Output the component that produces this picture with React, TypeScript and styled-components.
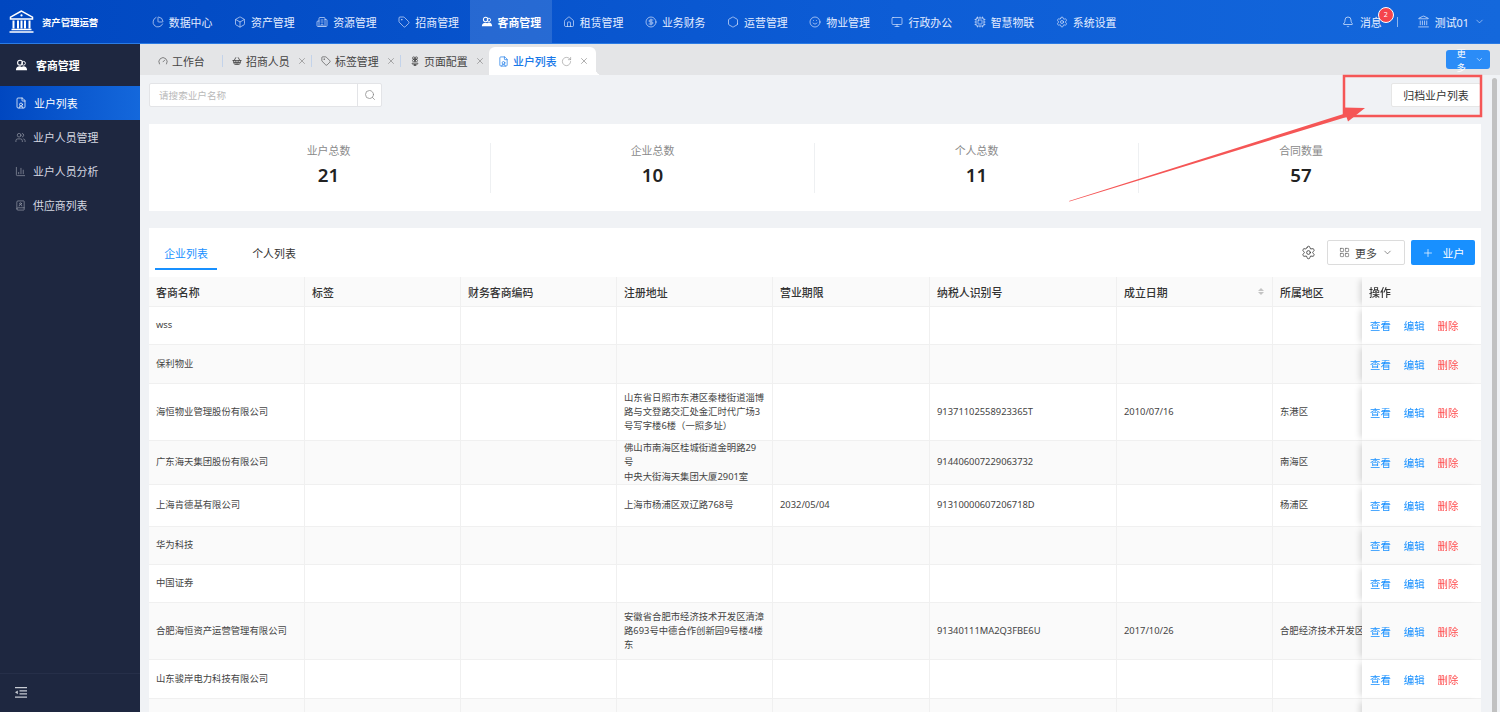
import React from 'react';
import styled, { createGlobalStyle } from 'styled-components';
import {
  ChartPie, Box, Building2, Tag, House, CircleDollarSign, Hexagon, Smile, Monitor, Cpu, Settings, Bell,
  Landmark, ChevronDown, Plus, Search, X, RotateCw, Gauge, FileUser, Users, ChartColumn, BookUser, Flower2, ShoppingBasket, LayoutGrid,
} from 'lucide-react';

const Global = createGlobalStyle`
  html, body { margin: 0; padding: 0; height: 100%; overflow: hidden; }
  body { font-family: "Noto Sans", "Noto Sans CJK SC", sans-serif; font-size: 9.36px; color: #333; background: #f0f2f5; }
  #root { height: 100%; }
  * { box-sizing: border-box; }
`;

const Page = styled.div`
  position: relative;
  width: 1500px;
  height: 712px;
  display: flex;
  flex-direction: column;
  overflow: hidden;
`;
const TopBar = styled.header`
  height: 44px;
  flex: none;
  display: flex;
  align-items: stretch;
  color: #e8f0ff;
  background: linear-gradient(90deg, #0047c0 0%, #0d5dd6 60%, #1468dc 100%);
  border-bottom: 1px solid #2b7be4;
`;
const Brand = styled.div`
  width: 141px;
  display: flex;
  align-items: center;
  gap: 8px;
  padding-left: 9px;
  color: #fff;
  font-size: 9.36px;
  font-weight: 700;
`;
const NavItem = styled.div<{ $active?: boolean }>`
  width: 82.2px;
  display: flex;
  align-items: center;
  justify-content: center;
  gap: 5px;
  font-size: 10.9px;
  white-space: nowrap;
  background: ${(p) => (p.$active ? 'rgba(255,255,255,.13)' : 'transparent')};
  font-weight: ${(p) => (p.$active ? 700 : 400)};
  color: ${(p) => (p.$active ? '#fff' : '#e4edff')};
`;
const TopRight = styled.div`
  margin-left: auto;
  display: flex;
  align-items: center;
  padding-right: 15px;
  font-size: 10.9px;
`;
const Message = styled.div`
  position: relative;
  display: flex;
  align-items: center;
  gap: 6px;
`;
const Badge = styled.span`
  position: absolute;
  right: -12px;
  top: -7px;
  width: 16px;
  height: 16px;
  border-radius: 50%;
  background: #f5444c;
  border: 1px solid #fff;
  color: #fff;
  font-size: 7px;
  display: flex;
  align-items: center;
  justify-content: center;
`;
const TopDivider = styled.span`
  width: 1px;
  height: 10px;
  background: #8db6ee;
  margin: 0 19px 0 15px;
`;
const UserBox = styled.div`
  display: flex;
  align-items: center;
  gap: 5px;
`;

const Body = styled.div`
  flex: 1;
  min-height: 0;
  display: flex;
`;
const Sidebar = styled.aside`
  width: 140px;
  flex: none;
  background: #1e2740;
  display: flex;
  flex-direction: column;
  color: #d5d8e0;
  font-size: 10.9px;
`;
const SideTitle = styled.div`
  height: 42px;
  display: flex;
  align-items: center;
  gap: 8px;
  padding-left: 15px;
  color: #fff;
  font-weight: 700;
`;
const SideItem = styled.div<{ $active?: boolean }>`
  height: 34px;
  display: flex;
  align-items: center;
  gap: 7px;
  padding-left: 15px;
  color: ${(p) => (p.$active ? '#fff' : '#d5d8e0')};
  background: ${(p) => (p.$active ? 'linear-gradient(90deg, #0047c0, #1468dc)' : 'transparent')};
  svg { opacity: ${(p) => (p.$active ? 1 : 0.7)}; }
`;
const SideFoot = styled.div`
  margin-top: auto;
  height: 39px;
  display: flex;
  align-items: center;
  padding: 0 0 2px 15px;
  border-top: 1px solid #262f49;
`;
const Main = styled.main`
  flex: 1;
  min-width: 0;
  display: flex;
  flex-direction: column;
`;
const TabBar = styled.div`
  height: 31px;
  flex: none;
  background: #e4e5e7;
  display: flex;
  align-items: flex-end;
  font-size: 10.9px;
  color: #444;
`;
const PageTab = styled.div<{ $first?: boolean; $active?: boolean }>`
  position: relative;
  height: 28px;
  display: flex;
  align-items: center;
  white-space: nowrap;
  gap: 4px;
  width: ${(p) => (p.$first ? '82px' : p.$active ? '107px' : '89px')};
  padding-left: ${(p) => (p.$first ? '18px' : p.$active ? '9px' : '10px')};
  background: ${(p) => (p.$active ? '#fff' : 'transparent')};
  border-radius: ${(p) => (p.$active ? '6px 6px 0 0' : '0')};
  color: ${(p) => (p.$active ? '#1677e8' : '#444')};
  font-weight: ${(p) => (p.$active ? 500 : 400)};
  &::before {
    content: '';
    display: ${(p) => (p.$first || p.$active ? 'none' : 'block')};
    position: absolute;
    left: 0;
    top: 8px;
    width: 1px;
    height: 12px;
    background: #c3d3ea;
  }
  &::after {
    content: '';
    display: ${(p) => (p.$active ? 'block' : 'none')};
    position: absolute;
    right: -6px;
    bottom: 0;
    width: 6px;
    height: 6px;
    background: radial-gradient(circle at 100% 0, transparent 6px, #fff 6.5px);
  }
`;
const TabClose = styled(X)`
  margin-left: 3px;
  color: #777;
`;
const TabMore = styled.button`
  margin: 0 10px 6px auto;
  width: 44px;
  height: 19px;
  border: 0;
  border-radius: 3px;
  background: #2b8cf7;
  color: #fff;
  font: inherit;
  font-size: 9.36px;
  display: flex;
  align-items: center;
  justify-content: center;
  gap: 5px;
`;
const Content = styled.div`
  position: relative;
  flex: 1;
  min-height: 0;
  overflow: hidden;
  padding: 8px 19px 0 9px;
  background: #f0f2f5;
  display: flex;
  flex-direction: column;
`;
const Scrollbar = styled.div`
  position: absolute;
  top: 3px;
  right: 3px;
  bottom: 0;
  width: 5px;
  border-radius: 3px 3px 0 0;
  background: #c1c1c1;
`;
const ToolRow = styled.div`
  height: 24px;
  flex: none;
  display: flex;
  justify-content: space-between;
`;
const SearchBox = styled.div`
  width: 233px;
  display: flex;
  background: #fff;
  border: 1px solid #e3e4e7;
  border-radius: 2px;
  color: #bbb;
  font-size: 10.9px;
`;
const SearchText = styled.div`
  flex: 1;
  display: flex;
  align-items: center;
  padding-left: 9px;
  font-size: 9.6px;
  color: #b9b9b9;
`;
const SearchBtn = styled.div`
  width: 24px;
  display: flex;
  align-items: center;
  justify-content: center;
  border-left: 1px solid #e3e4e7;
  color: #888;
`;
const ArchiveBtn = styled.div`
  width: 90px;
  background: #fff;
  border: 1px solid #e6e6e6;
  border-radius: 2px;
  display: flex;
  align-items: center;
  justify-content: center;
  font-size: 10.9px;
  color: #333;
`;
const StatCard = styled.section`
  margin-top: 17px;
  height: 87px;
  flex: none;
  background: #fff;
  padding: 19px 18px 18px;
  display: grid;
  grid-template-columns: repeat(4, 1fr);
`;
const Stat = styled.div<{ $last?: boolean }>`
  height: 50px;
  display: flex;
  flex-direction: column;
  align-items: center;
  border-right: ${(p) => (p.$last ? '0' : '1px solid #eef0f2')};
`;
const StatLabel = styled.div`
  font-size: 10.9px;
  line-height: 16px;
  color: #8a8a8a;
`;
const StatValue = styled.div`
  margin-top: 4px;
  font-size: 18.7px;
  line-height: 24px;
  font-weight: 600;
  color: #222;
`;
const ListCard = styled.section`
  margin-top: 17px;
  flex: 1;
  min-height: 0;
  background: #fff;
  display: flex;
  flex-direction: column;
`;
const ListHead = styled.div`
  height: 49px;
  flex: none;
  display: flex;
  align-items: flex-start;
  padding: 12px 6px 0 6px;
`;
const ListTab = styled.div<{ $active?: boolean }>`
  height: 30px;
  width: ${(p) => (p.$active ? '62px' : '44px')};
  margin-right: ${(p) => (p.$active ? '35px' : '0')};
  display: flex;
  justify-content: center;
  padding-top: 5px;
  font-size: 10.9px;
  color: ${(p) => (p.$active ? '#1890ff' : '#333')};
  border-bottom: ${(p) => (p.$active ? '2px solid #1890ff' : '0')};
`;
const ListActions = styled.div`
  margin-left: auto;
  display: flex;
  align-items: center;
  gap: 6px;
  height: 25px;
`;
const GearWrap = styled.div`
  display: flex;
  margin-right: 5px;
  color: #333;
`;
const MoreBtn = styled.div`
  width: 78px;
  height: 25px;
  background: #fff;
  border: 1px solid #dcdcdc;
  border-radius: 2px;
  font-size: 10.9px;
  display: flex;
  align-items: center;
  justify-content: center;
  gap: 5px;
  color: #444;
`;
const AddBtn = styled.div`
  width: 64px;
  height: 25px;
  background: #1890ff;
  border-radius: 2px;
  color: #fff;
  font-size: 10.9px;
  display: flex;
  align-items: center;
  justify-content: center;
  gap: 9px;
`;
const TableWrap = styled.div`
  flex: 1;
  min-height: 0;
  overflow: hidden;
`;
const Table = styled.table`
  table-layout: fixed;
  width: 1399px;
  border-collapse: separate;
  border-spacing: 0;
`;
const Th = styled.th<{ $sticky?: boolean }>`
  height: 30px;
  padding: 0 7px;
  text-align: left;
  font-size: 10.9px;
  font-weight: 500;
  color: #333;
  background: #fafafa;
  border-right: 1px solid #f0f0f0;
  border-bottom: 1px solid #f0f0f0;
  white-space: nowrap;
  ${(p) =>
    p.$sticky
      ? `position: sticky; right: 0; padding-left: 7px; border-right: 0; box-shadow: -5px 0 6px -3px rgba(0,0,0,.15);`
      : ''}
`;
const SortHead = styled.div`
  display: flex;
  align-items: center;
  justify-content: space-between;
  padding-right: 1px;
`;
const Carets = styled.div`
  display: flex;
  flex-direction: column;
  gap: 1px;
`;
const Caret = styled.i<{ $down?: boolean }>`
  display: block;
  width: 0;
  height: 0;
  border-left: 3px solid transparent;
  border-right: 3px solid transparent;
  border-bottom: ${(p) => (p.$down ? '0' : '3px solid #c4c4c4')};
  border-top: ${(p) => (p.$down ? '3px solid #c4c4c4' : '0')};
`;
const Tr = styled.tr<{ $h: number; $even: boolean }>`
  height: ${(p) => p.$h}px;
  background: ${(p) => (p.$even ? '#fafafa' : '#fff')};
`;
const Td = styled.td`
  padding: 0 7px;
  font-size: 9.36px;
  line-height: 14.2px;
  color: #444;
  background: inherit;
  border-right: 1px solid #f0f0f0;
  border-bottom: 1px solid #f0f0f0;
  white-space: pre-line;
  overflow: hidden;
`;
const Clip = styled.div`
  white-space: nowrap;
  overflow: hidden;
`;
const ActionTd = styled.td`
  position: sticky;
  right: 0;
  padding: 0 0 0 8px;
  font-size: 10.4px;
  background: inherit;
  border-bottom: 1px solid #f0f0f0;
  box-shadow: -5px 0 6px -3px rgba(0,0,0,.15);
  white-space: nowrap;
`;
const Act = styled.span<{ $danger?: boolean }>`
  color: ${(p) => (p.$danger ? '#ff4d4f' : '#1890ff')};
  margin-right: 13px;
`;
const Annotation = styled.svg`
  position: absolute;
  left: 0;
  top: 0;
  pointer-events: none;
`;

const nav: [string, React.ElementType][] = [
  ['数据中心', ChartPie], ['资产管理', Box], ['资源管理', Building2], ['招商管理', Tag], ['客商管理', CustomerIcon],
  ['租赁管理', House], ['业务财务', CircleDollarSign], ['运营管理', Hexagon], ['物业管理', Smile], ['行政办公', Monitor],
  ['智慧物联', Cpu], ['系统设置', Settings],
];

const rows: { h: number; cells: string[] }[] = [
  { h: 38, cells: ['wss', '', '', '', '', '', '', ''] },
  { h: 39, cells: ['保利物业', '', '', '', '', '', '', ''] },
  { h: 57, cells: ['海恒物业管理股份有限公司', '', '', '山东省日照市东港区秦楼街道淄博\n路与文登路交汇处金汇时代广场3\n号写字楼6楼（一照多址）', '', '91371102558923365T', '2010/07/16', '东港区'] },
  { h: 44, cells: ['广东海天集团股份有限公司', '', '', '佛山市南海区桂城街道金明路29号\n中央大街海天集团大厦2901室', '', '914406007229063732', '', '南海区'] },
  { h: 42, cells: ['上海肯德基有限公司', '', '', '上海市杨浦区双辽路768号', '2032/05/04', '91310000607206718D', '', '杨浦区'] },
  { h: 38, cells: ['华为科技', '', '', '', '', '', '', ''] },
  { h: 38, cells: ['中国证券', '', '', '', '', '', '', ''] },
  { h: 57, cells: ['合肥海恒资产运营管理有限公司', '', '', '安徽省合肥市经济技术开发区清漳\n路693号中德合作创新园9号楼4楼\n东', '', '91340111MA2Q3FBE6U', '2017/10/26', '合肥经济技术开发区'] },
  { h: 39, cells: ['山东骏岸电力科技有限公司', '', '', '', '', '', '', ''] },
  { h: 38, cells: ['', '', '', '', '', '', '', ''] },
];

const heads = ['客商名称', '标签', '财务客商编码', '注册地址', '营业期限', '纳税人识别号', '成立日期', '所属地区'];
const widths = [156, 156, 156, 156, 157, 187, 156, 156, 119];

function CustomerIcon({ size = 13 }: { size?: number }) {
  return (
    <svg width={size} height={size} viewBox="0 0 14 14" fill="currentColor">
      <circle cx="5.4" cy="4" r="2.6" fill="none" stroke="currentColor" strokeWidth="1.2" />
      <circle cx="9.2" cy="4.6" r="2" fill="none" stroke="currentColor" strokeWidth="1" />
      <path d="M1 12c0-2.6 1.6-4.2 4-4.2 1 0 1.7.3 2.3.7.5-.5 1.1-.8 2-.8 2 0 3.7 1.6 3.7 4.3z" />
    </svg>
  );
}

function BankLogo() {
  return (
    <svg width="25" height="23" viewBox="0 0 25 23" fill="none" stroke="#fff">
      <path d="M12.5 1 1.5 7.2V9h22V7.2z" strokeWidth="1.5" />
      <circle cx="12.5" cy="5.4" r="1.1" fill="#fff" stroke="none" />
      <path d="M4.5 10.5v8M9 10.5v8M12.5 10.5v8M16 10.5v8M20.5 10.5v8" strokeWidth="2" />
      <path d="M2.5 19.5h20M.5 22h24" strokeWidth="1.5" />
    </svg>
  );
}

function CollapseIcon() {
  return (
    <svg width="12" height="11" viewBox="0 0 12 11" fill="none" stroke="#c8ccd4" strokeWidth="1.2">
      <path d="M0 .7h12M4.5 3.8H12M4.5 6.9H12M0 10.2h12" />
      <path d="M0 5.3 2.8 3.4v3.8z" fill="#c8ccd4" stroke="none" />
    </svg>
  );
}

export default function App() {
  return (
    <Page>
      <Global />
      <TopBar>
        <Brand><BankLogo />资产管理运营</Brand>
        {nav.map(([t, I], i) => (
          <NavItem key={t} $active={i === 4}>
            <I size={12} strokeWidth={1.3} />
            {t}
          </NavItem>
        ))}
        <TopRight>
          <Message>
            <Bell size={12} strokeWidth={1.4} />
            消息
            <Badge>2</Badge>
          </Message>
          <TopDivider />
          <UserBox>
            <Landmark size={13} strokeWidth={1.3} />
            测试01
            <ChevronDown size={11} strokeWidth={1.2} />
          </UserBox>
        </TopRight>
      </TopBar>
      <Body>
        <Sidebar>
          <SideTitle><CustomerIcon />客商管理</SideTitle>
          <SideItem $active><FileUser size={12} strokeWidth={1.5} />业户列表</SideItem>
          <SideItem><Users size={11} strokeWidth={1.4} />业户人员管理</SideItem>
          <SideItem><ChartColumn size={11} strokeWidth={1.4} />业户人员分析</SideItem>
          <SideItem><BookUser size={11} strokeWidth={1.4} />供应商列表</SideItem>
          <SideFoot><CollapseIcon /></SideFoot>
        </Sidebar>
        <Main>
          <TabBar>
            <PageTab $first><Gauge size={10} strokeWidth={1.5} />工作台</PageTab>
            <PageTab><ShoppingBasket size={10} strokeWidth={2} />招商人员<TabClose size={10} strokeWidth={1.4} /></PageTab>
            <PageTab><Tag size={10} strokeWidth={1.5} />标签管理<TabClose size={10} strokeWidth={1.4} /></PageTab>
            <PageTab><Flower2 size={10} strokeWidth={1.8} />页面配置<TabClose size={10} strokeWidth={1.4} /></PageTab>
            <PageTab $active>
              <FileUser size={11} strokeWidth={1.5} />业户列表
              <RotateCw size={11} strokeWidth={1.2} color="#888" />
              <TabClose size={10} strokeWidth={1.4} />
            </PageTab>
            <TabMore>更多<ChevronDown size={9} strokeWidth={1.5} /></TabMore>
          </TabBar>
          <Content>
            <Scrollbar />
            <ToolRow>
              <SearchBox>
                <SearchText>请搜索业户名称</SearchText>
                <SearchBtn><Search size={12} strokeWidth={1.5} /></SearchBtn>
              </SearchBox>
              <ArchiveBtn>归档业户列表</ArchiveBtn>
            </ToolRow>
            <StatCard>
              {[['业户总数', '21'], ['企业总数', '10'], ['个人总数', '11'], ['合同数量', '57']].map(([l, v], i) => (
                <Stat key={l} $last={i === 3}>
                  <StatLabel>{l}</StatLabel>
                  <StatValue>{v}</StatValue>
                </Stat>
              ))}
            </StatCard>
            <ListCard>
              <ListHead>
                <ListTab $active>企业列表</ListTab>
                <ListTab>个人列表</ListTab>
                <ListActions>
                  <GearWrap><Settings size={15} strokeWidth={1.3} /></GearWrap>
                  <MoreBtn><LayoutGrid size={11} strokeWidth={1.2} />更多<ChevronDown size={11} strokeWidth={1.3} /></MoreBtn>
                  <AddBtn><Plus size={12} strokeWidth={1.4} />业户</AddBtn>
                </ListActions>
              </ListHead>
              <TableWrap>
                <Table>
                  <colgroup>
                    {widths.map((w, i) => <col key={i} width={w} />)}
                  </colgroup>
                  <thead>
                    <tr>
                      {heads.map((h) => (
                        <Th key={h}>
                          {h === '成立日期' ? (
                            <SortHead>{h}<Carets><Caret /><Caret $down /></Carets></SortHead>
                          ) : h}
                        </Th>
                      ))}
                      <Th $sticky>操作</Th>
                    </tr>
                  </thead>
                  <tbody>
                    {rows.map((r, i) => (
                      <Tr key={i} $h={r.h} $even={i % 2 === 1}>
                        {r.cells.map((c, j) => (
                          <Td key={j}>{j === 7 ? <Clip>{c}</Clip> : c}</Td>
                        ))}
                        <ActionTd>
                          {r.cells[0] || i < 9 ? (
                            <>
                              <Act>查看</Act><Act>编辑</Act><Act $danger>删除</Act>
                            </>
                          ) : null}
                        </ActionTd>
                      </Tr>
                    ))}
                  </tbody>
                </Table>
              </TableWrap>
            </ListCard>
          </Content>
        </Main>
      </Body>
      <Annotation width="1500" height="712" viewBox="0 0 1500 712">
        <rect x="1344" y="76" width="137" height="40" fill="none" stroke="#f55656" strokeWidth="2.5" />
        <polygon points="1069,201 1345,113.5 1343,107.5 1365,108 1348,121.5 1346.5,117 1069.5,201.5" fill="#f55656" />
      </Annotation>
    </Page>
  );
}
